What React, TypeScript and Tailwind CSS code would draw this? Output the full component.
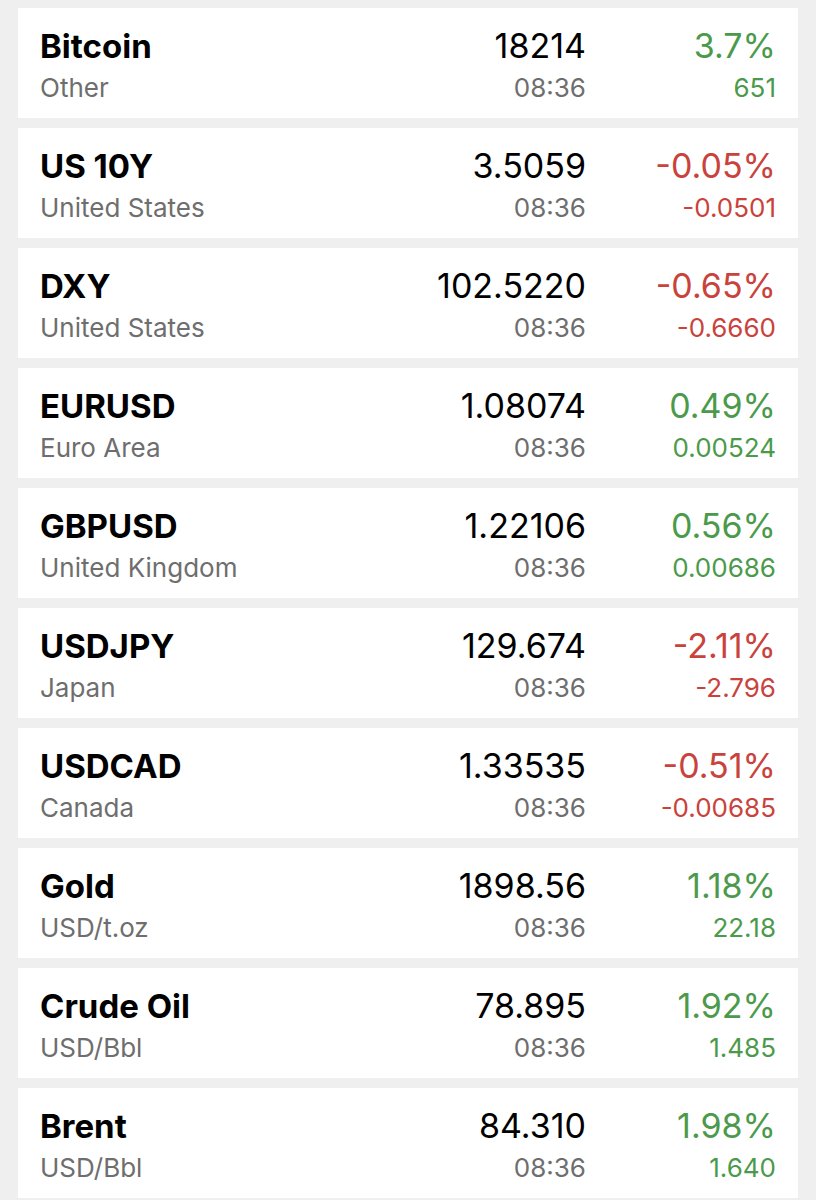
type Quote = {
  name: string;
  region: string;
  value: string;
  time: string;
  pct: string;
  change: string;
  up: boolean;
};

const quotes: Quote[] = [
  { name: "Bitcoin", region: "Other", value: "18214", time: "08:36", pct: "3.7%", change: "651", up: true },
  { name: "US 10Y", region: "United States", value: "3.5059", time: "08:36", pct: "-0.05%", change: "-0.0501", up: false },
  { name: "DXY", region: "United States", value: "102.5220", time: "08:36", pct: "-0.65%", change: "-0.6660", up: false },
  { name: "EURUSD", region: "Euro Area", value: "1.08074", time: "08:36", pct: "0.49%", change: "0.00524", up: true },
  { name: "GBPUSD", region: "United Kingdom", value: "1.22106", time: "08:36", pct: "0.56%", change: "0.00686", up: true },
  { name: "USDJPY", region: "Japan", value: "129.674", time: "08:36", pct: "-2.11%", change: "-2.796", up: false },
  { name: "USDCAD", region: "Canada", value: "1.33535", time: "08:36", pct: "-0.51%", change: "-0.00685", up: false },
  { name: "Gold", region: "USD/t.oz", value: "1898.56", time: "08:36", pct: "1.18%", change: "22.18", up: true },
  { name: "Crude Oil", region: "USD/Bbl", value: "78.895", time: "08:36", pct: "1.92%", change: "1.485", up: true },
  { name: "Brent", region: "USD/Bbl", value: "84.310", time: "08:36", pct: "1.98%", change: "1.640", up: true },
];

function QuoteRow({ q }: { q: Quote }) {
  const tone = q.up ? "text-[#4b9a4b]" : "text-[#c9423c]";
  return (
    <div className="h-[110px] bg-white pl-[22px] pr-[22px] pt-[18px] flex">
      {/* name + region */}
      <div className="flex-1 min-w-0">
        <div className="h-[40px] leading-[40px] text-[33px] font-bold text-black">{q.name}</div>
        <div className="h-[44px] leading-[44px] text-[26px] text-[#6e6e6e]">{q.region}</div>
      </div>

      {/* last price */}
      <div className="text-right">
        <div className="h-[40px] leading-[40px] text-[34px] text-black">{q.value}</div>
        <div className="h-[44px] leading-[44px] text-[26px] text-[#6e6e6e]">{q.time}</div>
      </div>

      {/* change */}
      <div className={`w-[190px] text-right ${tone}`}>
        <div className="h-[40px] leading-[40px] text-[34px]">{q.pct}</div>
        <div className="h-[44px] leading-[44px] text-[26px]">{q.change}</div>
      </div>
    </div>
  );
}

export default function App() {
  return (
    <div
      className="min-h-[1200px] w-[816px] bg-[#efefef] px-[18px] pt-[8px] flex flex-col gap-[10px]"
      style={{ fontFamily: "Inter, 'Noto Sans', sans-serif" }}
    >
      {quotes.map((q) => (
        <QuoteRow key={q.name} q={q} />
      ))}
    </div>
  );
}
